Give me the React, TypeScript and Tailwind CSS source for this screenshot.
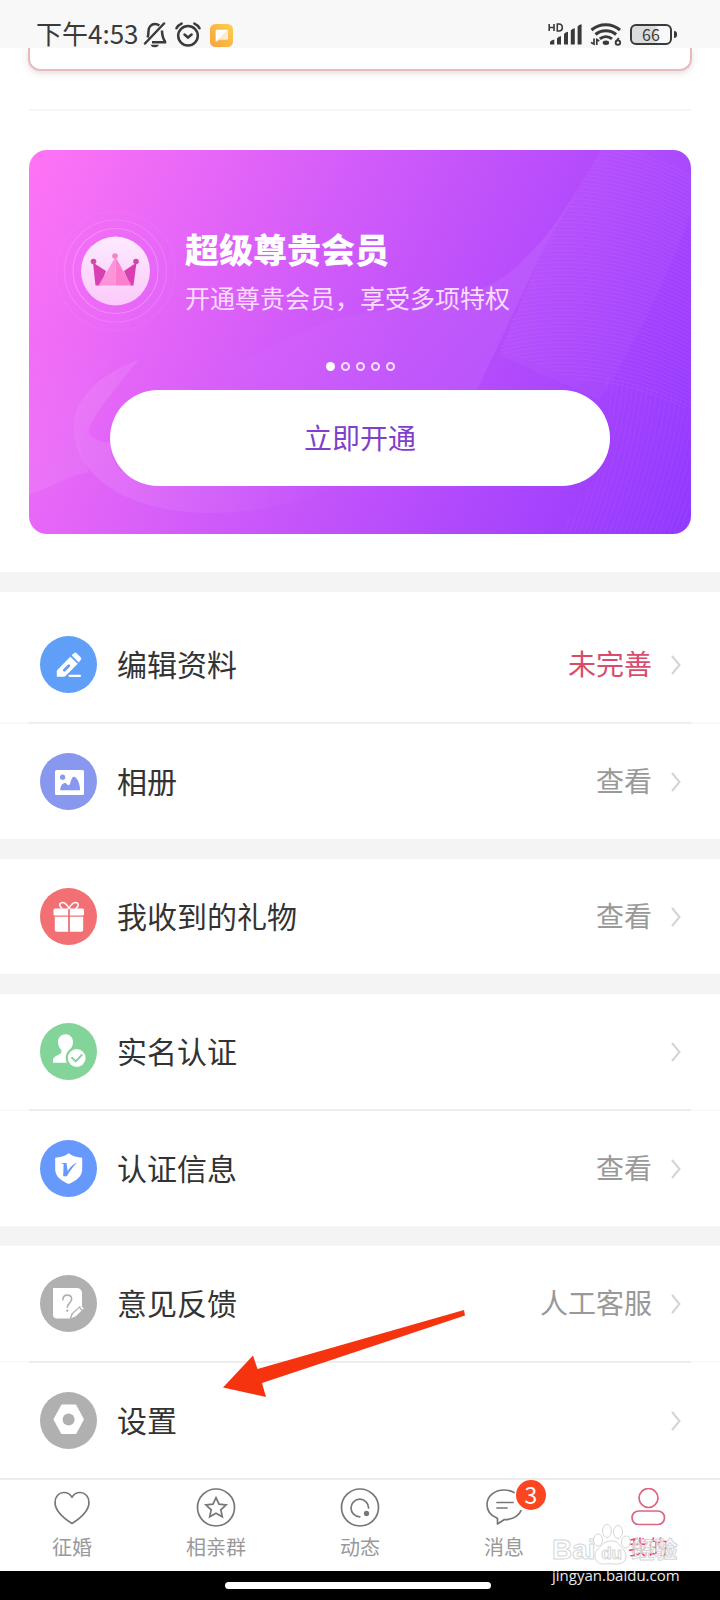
import React from 'react';

type MenuItem = {
  id: string;
  label: string;
  value?: string;
  valueClass?: string;
  iconClass: string;
  icon: React.ReactNode;
};

const EditIcon = () => (
  <svg viewBox="0 0 57 57" className="size-full" aria-hidden="true">
    <path d="M16.8 40.800v-5.800a1.500 1.500 0 0 1 .5-1.100l13-13.200 7.400 7.100-12.200 12.200a2.600 2.600 0 0 1-1.800.8z" fill="#fff" />
    <path d="M24.300 34.200l4.500-4.500" stroke="#5f9ff8" strokeWidth="2.800" strokeLinecap="round" />
    <path d="M31.600 19.300l2.500-2.400a1.600 1.600 0 0 1 2.200 0l4.600 4.700a1.600 1.600 0 0 1 0 2.200l-2.200 2.600z" fill="#fff" />
    <path d="M29.500 39.800h10.500" stroke="#fff" strokeWidth="2.200" strokeLinecap="round" />
  </svg>
);

const PhotoIcon = () => (
  <svg viewBox="0 0 57 57" className="size-full" aria-hidden="true">
    <rect x="15" y="17" width="29" height="25" rx="1.500" fill="#fff" />
    <circle cx="22.600" cy="24.200" r="2.600" fill="#8798ee" />
    <path d="M20.300 37.200c-.3-3.500 2-7.200 4.600-7.200 2.200 0 2.300 2.300 3.800 2.300 1.900 0 2.200-8.500 5.200-8.500 2.900 0 6.500 7.200 6.100 13.400z" fill="#8798ee" />
  </svg>
);

const GiftIcon = () => (
  <svg viewBox="0 0 57 57" className="size-full" aria-hidden="true">
    <rect x="13.500" y="20.500" width="30.500" height="7" rx="1.500" fill="#fff" />
    <path d="M14.800 28.800h28.400v13a2 2 0 0 1-2 2H16.800a2 2 0 0 1-2-2z" fill="#fff" />
    <path d="M29 21v23" stroke="#f27074" strokeWidth="1.800" />
    <path
      d="M29 20.500c-1.500-4-5-6.500-7.600-5.800-2.300.6-2.200 3.800.4 5.400M29 20.500c1.500-4 5-6.500 7.600-5.800 2.300.6 2.200 3.800-.4 5.400"
      fill="none"
      stroke="#fff"
      strokeWidth="1.600"
      strokeLinecap="round"
    />
  </svg>
);

const PersonIcon = () => (
  <svg viewBox="0 0 57 57" className="size-full" aria-hidden="true">
    <path
      d="M25.500 11.300c4.400 0 7.500 3.200 7.500 7.700 0 3.300-1.500 6.300-3.300 7.900v2.400c1 1.600 4 2 6.300 3.500v7H13v-3.300c.8-3.500 7.300-4.700 8.400-7v-2.600c-1.900-1.600-3.400-4.600-3.400-7.900 0-4.500 3.100-7.700 7.500-7.700z"
      fill="#fff"
    />
    <circle cx="36.700" cy="35" r="11" fill="#82d499" />
    <circle cx="36.700" cy="35" r="8.900" fill="#fff" />
    <path d="M32 34.800l3.700 3.600 6-6.400" fill="none" stroke="#82d499" strokeWidth="1.900" strokeLinecap="round" strokeLinejoin="round" />
  </svg>
);

const ShieldIcon = () => (
  <svg viewBox="0 0 57 57" className="size-full" aria-hidden="true">
    <path d="M28.700 13.300c3.800 2.900 8.600 4.200 13.500 4.500v11.400c0 7-5.800 11.600-13.500 14.800-7.700-3.200-13.500-7.800-13.500-14.800V17.800c4.900-.3 9.700-1.600 13.500-4.500z" fill="#fff" />
    <path d="M21.300 23h5.200l1.200 8.200c2-3.500 4.200-6.400 9.300-8.500-3.800 3.600-6.800 8-10.200 13.600h-3.600l.4-12z" fill="#6699fb" />
  </svg>
);

const FeedbackIcon = () => (
  <svg viewBox="0 0 57 57" className="size-full" aria-hidden="true">
    <path d="M13 13h24a5 5 0 0 1 5 5v12.800L30.500 43.500H17a4 4 0 0 1-4-4z" fill="#fff" />
    <path d="M29.500 43.800l2-5.300 8.300-7.600 4 3.600-8 8z" fill="#b0b0b0" />
    <path d="M31.300 42.900l1.600-3.900 6.300-5.900 2.500 2.500-6.200 6zM40.200 32.200l1.200-1.100 2.400 2.400-1.200 1.200z" fill="#fff" />
    <path d="M22.900 24.800c0-3 1.800-4.700 4.300-4.700 2.600 0 4.400 1.700 4.400 4.200 0 3.600-4.300 4-4.300 8" fill="none" stroke="#b0b0b0" strokeWidth="1.600" strokeLinecap="round" />
    <circle cx="27.300" cy="35.600" r="1.200" fill="#b0b0b0" />
  </svg>
);

const SettingsIcon = () => (
  <svg viewBox="0 0 57 57" className="size-full" aria-hidden="true">
    <path d="M22 13.500h13.500L43 27.400l-7.500 13.800H22l-7.600-13.800z" fill="#fff" stroke="#fff" strokeWidth="1.800" strokeLinejoin="round" />
    <circle cx="28.600" cy="27.500" r="6" fill="#b0b0b0" />
  </svg>
);

const menuGroups: MenuItem[][] = [
  [
    { id: 'edit', label: '编辑资料', value: '未完善', valueClass: 'text-[#d94c6c]', iconClass: 'bg-[#5f9ff8]', icon: <EditIcon /> },
    { id: 'album', label: '相册', value: '查看', iconClass: 'bg-[#8798ee]', icon: <PhotoIcon /> },
  ],
  [{ id: 'gifts', label: '我收到的礼物', value: '查看', iconClass: 'bg-[#f27074]', icon: <GiftIcon /> }],
  [
    { id: 'realname', label: '实名认证', iconClass: 'bg-[#82d499]', icon: <PersonIcon /> },
    { id: 'verify', label: '认证信息', value: '查看', iconClass: 'bg-[#6699fb]', icon: <ShieldIcon /> },
  ],
  [
    { id: 'feedback', label: '意见反馈', value: '人工客服', iconClass: 'bg-[#b0b0b0]', icon: <FeedbackIcon /> },
    { id: 'settings', label: '设置', iconClass: 'bg-[#b0b0b0]', icon: <SettingsIcon /> },
  ],
];

const StatusBar = () => (
  <header className="flex h-12 items-end justify-between bg-[#f8f8f8] pl-9 pr-[43px] text-[#3a3a3a]">
    <div className="flex items-center">
      <span className="text-[26px] leading-[28px]">下午4:53</span>
      <svg viewBox="0 0 24 26" className="ml-1 mt-1 h-[26px] w-6" fill="none" stroke="currentColor" strokeWidth="2.500" aria-hidden="true">
        <path d="M2 21.500L21 1.500" strokeLinecap="round" />
        <path d="M4.500 15.500c1-2 1-3.800 1-6.500 0-4 2.800-7 6.500-7 1.800 0 3.200.6 4.300 1.500M19 8.500c0 5 .3 7 3 10.900v.8H9" />
        <path d="M9 23.600c.8 1.200 4.600 1.200 5.500 0z" fill="currentColor" strokeWidth="1.500" />
      </svg>
      <svg viewBox="0 0 26 26" className="ml-2 mt-1 size-[26px]" fill="none" stroke="currentColor" strokeWidth="2.500" strokeLinecap="round" aria-hidden="true">
        <circle cx="13" cy="13.800" r="9.800" />
        <path d="M9.500 12.500l3.500 3 3.600-3M1.500 6.300C2.500 4 4.200 2.600 6.600 1.600M24.500 6.300c-1-2.300-2.700-3.700-5.100-4.700" />
      </svg>
      <svg viewBox="0 0 23 23" className="ml-[9px] mt-1 size-[23px]" aria-hidden="true">
        <defs>
          <linearGradient id="note" x1="0" y1="1" x2="1" y2="0">
            <stop offset="0" stopColor="#f9a13c" />
            <stop offset="1" stopColor="#fbd04e" />
          </linearGradient>
        </defs>
        <rect width="23" height="23" rx="5.500" fill="url(#note)" />
        <path d="M6.500 5.700h10.800a1 1 0 0 1 .8.600L5.700 18V6.500a.8.800 0 0 1 .8-.8z" fill="#fff" />
        <path d="M18.100 6.300v8.400a1 1 0 0 1-1 1H9.500L5.700 18z" fill="#fdeccf" />
      </svg>
    </div>
    <div className="flex items-center pb-[2px]">
      <svg viewBox="0 0 34 24" className="h-6 w-[34px]" fill="currentColor" aria-hidden="true">
        <path d="M1.200 2v7M6 2v7M1.200 5.500H6M9.300 2v7h1.700c4.400 0 4.400-7 0-7z" fill="none" stroke="currentColor" strokeWidth="1.600" />
        <path d="M2 22.500v-2.500l1.500-1.500 2.800-1v5zM9 22.500v-6l1.500-1.500 2.500-1v8.500zM16 22.500V12l1.500-1.500 2.500-.8v12.800zM22.800 22.500V8.500l1.500-1.500 2.500-.8v16.300zM29.600 22.500V4.500l1.500-1.500 2.500-.8v20.300z" />
      </svg>
      <svg viewBox="0 0 32 24" className="ml-2 h-6 w-8" fill="none" stroke="currentColor" strokeWidth="3" aria-hidden="true">
        <path d="M1.500 8c8-7 20.500-7 28.500 0M5.500 12.500c5.800-5 14.800-5 20.600 0M9.800 16.900c3.600-3 8.600-3 12.200 0" />
        <ellipse cx="15.900" cy="20.800" rx="3.200" ry="2.200" fill="currentColor" stroke="none" />
        <path d="M1 20.500l3 1.500v-5.500M6.800 23v-5.500l2.500 1.500" strokeWidth="1.700" />
        <path d="M28.800 16l-2.900 3.900" strokeWidth="1.900" />
        <circle cx="27.900" cy="20.600" r="2.300" strokeWidth="1.800" />
      </svg>
      <div className="ml-2 flex items-center">
        <div className="flex h-[21px] w-[42px] items-center justify-center rounded-[6px] border-2 border-[#3a3a3a] bg-linear-to-r from-[#dcdcdc] from-60% to-[#f8f8f8] to-70% text-[16px] leading-none">
          66
        </div>
        <div className="ml-[2px] h-[7px] w-[3px] rounded-r bg-[#3a3a3a]" />
      </div>
    </div>
  </header>
);

const Waves = () => {
  const upper = Array.from({ length: 60 }, (_, i) => i * 4);
  const lower = Array.from({ length: 50 }, (_, i) => i * 5);

  return (
    <svg viewBox="0 0 662 384" preserveAspectRatio="none" className="absolute inset-0 size-full" fill="none" aria-hidden="true">
      <defs>
        <linearGradient id="fold" x1="0" y1="0" x2="1" y2="0">
          <stop offset="0" stopColor="#fff" stopOpacity="0" />
          <stop offset="0.500" stopColor="#e6b0ff" stopOpacity="0.060" />
          <stop offset="1" stopColor="#e6b0ff" stopOpacity="0.160" />
        </linearGradient>
        <linearGradient id="swirl" x1="0" y1="0" x2="1" y2="0">
          <stop offset="0" stopColor="#fff" stopOpacity="0.100" />
          <stop offset="1" stopColor="#fff" stopOpacity="0" />
        </linearGradient>
        <linearGradient id="mist" x1="0" y1="0" x2="0" y2="1">
          <stop offset="0" stopColor="#fff" stopOpacity="0" />
          <stop offset="1" stopColor="#fff" stopOpacity="0.080" />
        </linearGradient>
        <clipPath id="upperWave">
          <path d="M572 0H662V260L560 235 470 200 514 100z" />
        </clipPath>
        <clipPath id="lowerWave">
          <path d="M662 250L575 225 585 300 530 384H662z" />
        </clipPath>
      </defs>
      <path d="M572 0C545 45 520 95 470 130 420 162 340 155 290 175 230 200 190 225 180 240H448L514 100z" fill="url(#fold)" />
      <path d="M572 0H662V60C650 100 610 190 570 250L470 205 514 100z" fill="#fff" fillOpacity="0.030" />
      <g clipPath="url(#upperWave)" stroke="#d9a6ff" strokeOpacity="0.110">
        {upper.map((y) => (
          <path key={y} d={`M440 ${y + 10}C520 ${y - 20} 600 ${y - 10} 670 ${y + 30}`} />
        ))}
      </g>
      <g clipPath="url(#lowerWave)" stroke="#c79bff" strokeOpacity="0.110">
        {lower.map((x) => (
          <path key={x} d={`M${x + 500} 384C${x + 520} 330 ${x + 535} 280 ${x + 540} 220`} />
        ))}
      </g>
      <path d="M109 210C70 225 38 250 46 290 55 330 100 362 180 363 240 362 280 350 310 336H130C90 330 80 310 82 293 65 292 58 285 60 278 70 258 85 240 109 210z" fill="url(#swirl)" />
      <path d="M0 190H109C70 225 38 250 46 290L60 322C40 325 20 338 0 345z" fill="url(#mist)" />
    </svg>
  );
};

const CrownBadge = () => (
  <svg viewBox="0 0 122 122" className="size-[122px] shrink-0" fill="none" aria-hidden="true">
    <defs>
      <linearGradient id="disc" x1="0" y1="0" x2="0" y2="1">
        <stop offset="0" stopColor="#fdeaff" />
        <stop offset="1" stopColor="#fcc9fb" />
      </linearGradient>
    </defs>
    <circle cx="60.500" cy="61" r="59.500" stroke="#fff" strokeOpacity="0.050" strokeWidth="1.200" />
    <circle cx="60.500" cy="61" r="51" stroke="#fff" strokeOpacity="0.130" strokeWidth="1.200" />
    <circle cx="60.500" cy="61" r="42.500" stroke="#fff" strokeOpacity="0.220" strokeWidth="1.200" />
    <circle cx="60.500" cy="61" r="34.500" fill="url(#disc)" />
    <path d="M38 52.500l13 8.500-5.500 14.500h-5z" fill="#d83fb2" />
    <path d="M81.500 52.500L69 61l6 14.500h3.500z" fill="#d83fb2" />
    <path d="M60.500 47L43.500 75.500h17z" fill="#fd93d8" />
    <path d="M60.500 47l16 28.500h-16z" fill="#fb7fce" />
    <circle cx="38.500" cy="51.500" r="2.800" fill="#cf4aa8" />
    <circle cx="81" cy="51.500" r="2.800" fill="#cf4aa8" />
    <circle cx="60" cy="46" r="2.800" fill="#f084c8" />
  </svg>
);

const VipCard = () => (
  <section className="relative mx-[29px] mt-[39px] h-96 overflow-hidden rounded-[18px] bg-[linear-gradient(115deg,#ff74f5,#c957fa_48%,#9138ff)]">
    <Waves />
    <div className="relative flex h-full flex-col pb-12 pt-[60px]">
      <div className="flex pl-[26px]">
        <CrownBadge />
        <div className="ml-2 pt-[18px] text-white">
          <h2 className="text-[34px] font-black leading-[42px]">超级尊贵会员</h2>
          <p className="mt-[7px] text-[25px] leading-[40px] text-[#fbdcff]">开通尊贵会员，享受多项特权</p>
        </div>
      </div>
      <div className="mt-auto flex justify-center gap-[6px]">
        <span className="size-[9px] rounded-full bg-white" />
        {[1, 2, 3, 4].map((dot) => (
          <span key={dot} className="size-[9px] rounded-full border-2 border-[#fbe3ff]" />
        ))}
      </div>
      <button type="button" className="mx-[81px] mt-[19px] h-24 rounded-full bg-white pb-[3px] text-[28px] text-[#8140cc]">
        立即开通
      </button>
    </div>
  </section>
);

const MenuRow = ({ item }: { item: MenuItem }) => (
  <button type="button" className="flex h-[115px] w-full items-center pl-10 pr-[39px] text-left">
    <span className={`size-[57px] shrink-0 rounded-full ${item.iconClass}`}>{item.icon}</span>
    <span className="ml-5 flex-1 pb-[3px] text-[30px] leading-[40px] text-[#333]">{item.label}</span>
    <span className={`pb-[3px] text-[28px] leading-[40px] ${item.valueClass || 'text-[#999]'}`}>{item.value}</span>
    <svg viewBox="0 0 10 20" className="ml-[19px] h-5 w-[10px]" fill="none" stroke="#d4d4d4" strokeWidth="2" aria-hidden="true">
      <path d="M1 1l7.500 9L1 19" />
    </svg>
  </button>
);

const Pointer = () => (
  <svg viewBox="0 0 244 90" className="pointer-events-none absolute left-[223px] top-[63px] h-[90px] w-[244px]" aria-hidden="true">
    <path d="M0 78.500L30 46.500 34.500 60 241 1 242 6.500 39 74 43 88z" fill="#f5330f" />
  </svg>
);

const tabs = [
  {
    label: '征婚',
    icon: <path d="M20 35.500C10.500 29.500 3 22.500 3 14.500 3 8.500 7 4.500 12 4.500c3.300 0 6.300 1.800 8 4.700 1.700-2.900 4.700-4.700 8-4.700 5 0 9 4 9 10 0 8-7.500 15-17 21z" />,
  },
  {
    label: '相亲群',
    icon: (
      <>
        <circle cx="20" cy="19.500" r="18.500" />
        <path d="M20 9.700l3 6.500 7.100.8-5.300 4.800 1.500 7-6.300-3.500-6.300 3.500 1.500-7-5.300-4.800 7.100-.8z" strokeLinejoin="miter" />
      </>
    ),
  },
  {
    label: '动态',
    icon: (
      <>
        <circle cx="20" cy="19.500" r="18.500" />
        <path d="M28.600 20a8.800 8.800 0 1 0-8.800 8.800" />
        <circle cx="26.500" cy="25.500" r="1.800" fill="currentColor" />
      </>
    ),
  },
  {
    label: '消息',
    badge: 3,
    icon: (
      <>
        <path d="M20 2c-9.500 0-17 6-17 14.500 0 6 3.700 10.700 9 13l1.500 1v5.500l6.500-4.300c8-.2 14.500-3.200 17-9M20 2c4 0 7 .8 10 2.500" />
        <path d="M13 14.500h16M13 20h10" />
      </>
    ),
  },
  {
    label: '我的',
    active: true,
    icon: (
      <>
        <circle cx="20.500" cy="10" r="9.500" />
        <rect x="4" y="23" width="32.500" height="13.500" rx="6.700" />
      </>
    ),
  },
];

const TabBar = () => (
  <nav className="grid h-[93px] grid-cols-5 border-t-2 border-[#ececec] bg-white">
    {tabs.map((tab) => (
      <button key={tab.label} type="button" className={`flex flex-col items-center pt-2 ${tab.active ? 'text-[#dc4a6e]' : 'text-[#999]'}`}>
        <span className="relative">
          <svg
            viewBox="0 0 40 40"
            className={`size-10 ${tab.active ? 'text-[#dc6580]' : 'text-[#777]'}`}
            fill="none"
            stroke="currentColor"
            strokeWidth="1.700"
            strokeLinecap="round"
            strokeLinejoin="round"
            aria-hidden="true"
          >
            {tab.icon}
          </svg>
          {tab.badge && (
            <span className="absolute -right-[22px] -top-2 flex size-[30px] items-center justify-center rounded-full bg-[#fc4521] pb-[2px] text-[23px] leading-none text-white">
              {tab.badge}
            </span>
          )}
        </span>
        <span className="mt-1 text-[20px] leading-[30px]">{tab.label}</span>
      </button>
    ))}
  </nav>
);

const Watermark = () => (
  <div className="pointer-events-none absolute bottom-4 right-[37px] w-[131px] font-['Liberation_Sans','Noto_Sans_CJK_SC',sans-serif]">
    <div className="flex items-end font-bold text-white/60 [-webkit-text-stroke:1px_#d6d6d6]">
      <span className="text-[28px] leading-[30px]">Bai</span>
      <span className="relative -ml-1 h-[42px] w-10 shrink-0">
        <svg viewBox="0 0 40 42" className="size-full" fill="#fff" fillOpacity="0.700" stroke="#d6d6d6" aria-hidden="true">
          <ellipse cx="6" cy="17" rx="4.500" ry="6" />
          <ellipse cx="15" cy="8" rx="4.500" ry="6.500" />
          <ellipse cx="26" cy="9" rx="4.500" ry="6.500" />
          <ellipse cx="34" cy="19" rx="4.500" ry="6" />
          <path d="M20 18c6 0 8 5 11 8 4 4 5 14-4 15-5 .5-10-1-15 0-10 .5-11-10-6-15 4-4 6-8 14-8z" />
        </svg>
        <span className="absolute inset-x-0 bottom-0 text-center text-[17px] leading-[22px]">du</span>
      </span>
      <span className="text-[23px] leading-[30px]">经验</span>
    </div>
    <div className="font-['Open_Sans',sans-serif] text-[15px] leading-[20px] text-[#e8e8e8]">jingyan.baidu.com</div>
  </div>
);

export default function App() {
  return (
    <div className="relative flex min-h-screen flex-col overflow-hidden bg-white font-['Noto_Sans_CJK_SC',sans-serif]">
      <StatusBar />
      <main className="flex-1">
        <div className="overflow-hidden px-7 pb-[38px]">
          <div className="h-[23px] rounded-b-xl border-2 border-t-0 border-[#e9b9c0] shadow-[0_2px_6px_rgba(150,110,130,0.25)]" />
        </div>
        <hr className="mx-[29px] border-t-2 border-[#f5f5f5]" />
        <VipCard />
        <div className="mt-[38px]">
          {menuGroups.map((group, index) => (
            <section key={group[0].id} className={`relative border-t-20 border-[#f4f4f4] ${index === 0 ? 'pt-[15px]' : ''}`}>
              {group.map((item, row) => (
                <React.Fragment key={item.id}>
                  {row > 0 && (
                    <div className="bg-[#f9f9f9] px-[29px]">
                      <div className="h-[2px] bg-[#eee]" />
                    </div>
                  )}
                  <MenuRow item={item} />
                </React.Fragment>
              ))}
              {index === menuGroups.length - 1 && <Pointer />}
            </section>
          ))}
        </div>
      </main>
      <TabBar />
      <div className="flex h-[30px] justify-center bg-black pr-1 pt-[11px]">
        <div className="h-[7px] w-[266px] rounded-full bg-white" />
      </div>
      <Watermark />
    </div>
  );
}
